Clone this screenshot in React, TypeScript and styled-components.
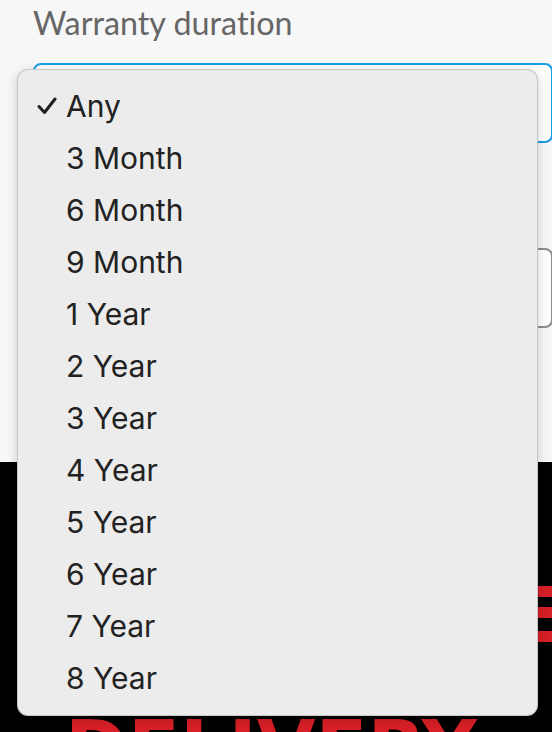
import React, { useState } from "react";
import styled, { createGlobalStyle } from "styled-components";

const GlobalStyle = createGlobalStyle`
  html, body {
    margin: 0;
    padding: 0;
    background: #000;
  }
  * {
    box-sizing: border-box;
  }
`;

const options = [
  "Any",
  "3 Month",
  "6 Month",
  "9 Month",
  "1 Year",
  "2 Year",
  "3 Year",
  "4 Year",
  "5 Year",
  "6 Year",
  "7 Year",
  "8 Year",
];

const CheckIcon = () => (
  <svg width="20" height="18" viewBox="0 0 20 18" fill="none">
    <path d="M2 9.5 L7.5 15.5 L18 2" stroke="#1f1f1f" strokeWidth="3" strokeLinecap="round" strokeLinejoin="round" />
  </svg>
);

export default function App() {
  const [selected, setSelected] = useState("Any");

  return (
    <S.Page>
      <GlobalStyle />
      <S.Form>
        <S.Label>Warranty duration</S.Label>
        <S.Field $focused>
          <span>{selected}</span>
        </S.Field>
        <S.Label $hidden>Condition</S.Label>
        <S.Field />
      </S.Form>

      <S.Banner>
        <S.BannerLine $indent={18}>FAST &amp; FREE</S.BannerLine>
        <S.BannerLine $indent={65}>DELIVERY</S.BannerLine>
      </S.Banner>

      <S.Menu>
        {options.map((opt) => (
          <S.Option key={opt} onClick={() => setSelected(opt)}>
            <S.Check>{opt === selected && <CheckIcon />}</S.Check>
            {opt}
          </S.Option>
        ))}
      </S.Menu>
    </S.Page>
  );
}

const S: any = {};

S.Page = styled.div`
  position: relative;
  width: 100%;
  height: 732px;
  overflow: hidden;
  background: #000;
  display: flex;
  flex-direction: column;
`;

S.Form = styled.div`
  background: #f7f7f7;
  height: 462px;
  flex-shrink: 0;
  padding: 2px 0 0 33px;
  display: flex;
  flex-direction: column;
`;

S.Label = styled.div`
  font-family: Lato, "Liberation Sans", sans-serif;
  font-variant-ligatures: none;
  font-size: 32.3px;
  line-height: 42px;
  color: #666;
  visibility: ${(p: any) => (p.$hidden ? "hidden" : "visible")};
  margin-bottom: ${(p: any) => (p.$hidden ? "30px" : "19px")};
  margin-top: ${(p: any) => (p.$hidden ? "33px" : "0")};
`;

S.Field = styled.div`
  height: 80px;
  flex-shrink: 0;
  margin-right: -1px;
  border: ${(p: any) => (p.$focused ? "2px solid #1a9de6" : "2px solid #8c8c8c")};
  border-radius: 8px;
  background: #fff;
  display: flex;
  align-items: center;
  padding: 0 20px;
  font-family: Lato, "Liberation Sans", sans-serif;
  font-size: 28px;
  color: #333;
`;

S.Banner = styled.div`
  flex: 1;
  min-height: 0;
  overflow: hidden;
  background: #000;
  padding-top: 98px;
  display: flex;
  flex-direction: column;
  gap: 21px;
`;

S.BannerLine = styled.div`
  font-family: "DejaVu Sans", "Liberation Sans", sans-serif;
  font-weight: 700;
  font-size: 76px;
  line-height: 112px;
  flex-shrink: 0;
  padding-left: ${(p: any) => p.$indent}px;
  color: #d71f27;
  white-space: nowrap;
`;

S.Menu = styled.div`
  position: absolute;
  left: 17px;
  top: 69px;
  width: 521px;
  padding: 10px 0 11px;
  background: #ececec;
  border: 1px solid rgba(0, 0, 0, 0.16);
  border-radius: 11px;
  box-shadow: 0 3px 12px rgba(0, 0, 0, 0.18);
  z-index: 10;
`;

S.Option = styled.div`
  height: 52px;
  display: flex;
  align-items: center;
  padding-left: 19px;
  font-family: Inter, "Noto Sans", sans-serif;
  font-size: 30px;
  color: #222;
  cursor: default;
`;

S.Check = styled.span`
  width: 29px;
  display: flex;
  align-items: center;
`;
